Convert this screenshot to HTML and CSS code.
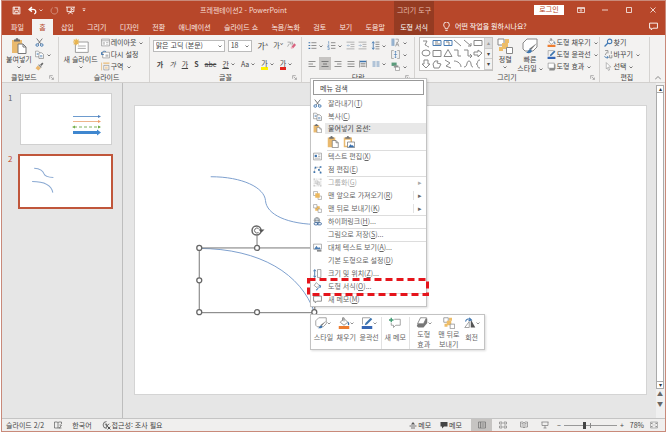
FILE: index.html
```html
<!DOCTYPE html>
<html lang="ko">
<head>
<meta charset="utf-8">
<title>프레젠테이션2 - PowerPoint</title>
<link rel="stylesheet" href="styles.css">
</head>
<body>
<svg class="sprite" aria-hidden="true">
  <symbol id="save" viewBox="0 0 16 16"><path d="M2 2h12v12H2zM4 2v5h8V2M5 14v-4h6v4" fill="none" stroke="currentColor" stroke-width="1.6"/></symbol>
  <symbol id="undo" viewBox="0 0 16 16"><path d="M7 2 2 6l5 4M2 6h7c6 0 6 7 2 8" fill="none" stroke="currentColor" stroke-width="2.4"/></symbol>
  <symbol id="redo" viewBox="0 0 16 16"><path d="M5 3a6 6 0 1 0 7 1M8 3h5v5" fill="none" stroke="currentColor" stroke-width="1.6"/></symbol>
  <symbol id="show" viewBox="0 0 16 16"><path d="M0 2h16M2 2v8h12V2M8 10v2M4 14l4-3 4 3M9 4v4l3-2z" fill="none" stroke="currentColor" stroke-width="1.5"/></symbol>
  <symbol id="chev" viewBox="0 0 8 8"><path d="m1 3 3 3 3-3" fill="none" stroke="currentColor" stroke-width="1.4"/></symbol>
  <symbol id="customize" viewBox="0 0 8 8"><path d="M1 1h6" stroke="currentColor"/><path d="M1 3.500h6L4 6.500z" fill="currentColor"/></symbol>
  <symbol id="display" viewBox="0 0 16 16"><path d="M1 3h14v10H1zM1 5h14M8 12V7M5.500 9.500 8 7l2.500 2.500" fill="none" stroke="currentColor" stroke-width="1.4"/></symbol>
  <symbol id="min" viewBox="0 0 16 16"><path d="M2 8h12" stroke="currentColor" stroke-width="1.5"/></symbol>
  <symbol id="max" viewBox="0 0 16 16"><path d="M3 3h10v10H3z" fill="none" stroke="currentColor" stroke-width="1.5"/></symbol>
  <symbol id="close" viewBox="0 0 16 16"><path d="m3 3 10 10M13 3 3 13" stroke="currentColor" stroke-width="1.5"/></symbol>
  <symbol id="bulb" viewBox="0 0 16 16"><path d="M6 12c0-3-3-3-3-7a5 5 0 0 1 10 0c0 4-3 4-3 7zM6 15h4" fill="none" stroke="currentColor" stroke-width="1.5"/></symbol>
  <symbol id="bubble" viewBox="0 0 16 16"><path d="M1 2h14v9H7l-3 3v-3H1z" fill="none" stroke="currentColor" stroke-width="1.6"/></symbol>
  <symbol id="paste" viewBox="0 0 16 16"><path d="M1 2h10v13H1z" fill="#e9b96e"/><path d="M3 3V1.500h1.500a1.500 1.500 0 0 1 3 0H9V3.500H3z" fill="#6f6f6f"/><path d="M7 6h5l3 3v6.500H7z" fill="#fff" stroke="#777"/><path d="M12 6v3h3" fill="none" stroke="#777"/></symbol>
  <symbol id="pastepic" viewBox="0 0 16 16"><path d="M1 2h11v13H1z" fill="#e9b96e"/><path d="M3 3V1.500h2a1.500 1.500 0 0 1 3 0h2v2H3z" fill="#777"/><path d="M3 5h7v8H3z" fill="#fff"/><path d="M6 8h9.500v7.500H6z" fill="#fff" stroke="#777"/><path d="m7 15 3-4 2 2 1-1 2 3z" fill="#376fae"/></symbol>
  <symbol id="cut" viewBox="0 0 16 16"><path d="m3 1 7.500 9.500M13 1 5.500 10.500" stroke="#666" stroke-width="1.500"/><circle cx="4" cy="12.500" r="2.300" fill="none" stroke="#3d74ae" stroke-width="1.600"/><circle cx="12" cy="12.500" r="2.300" fill="none" stroke="#3d74ae" stroke-width="1.600"/></symbol>
  <symbol id="copy" viewBox="0 0 16 16"><path d="M1 2h5l3 3v7H1z" fill="#fff" stroke="#777"/><path d="M7 5h5l3 3v7H7z" fill="#fff" stroke="#666"/><path d="M3 6h3M3 8h3M9 10h4M9 12h4" stroke="#3d74ae"/></symbol>
  <symbol id="brush" viewBox="0 0 16 16"><path d="m9 5 4-4 2 2-4 4z" fill="#666"/><path d="m7 4 5 5-1.500 1.500-5-5z" fill="#888"/><path d="m5 6 5 5-4 4-5-4z" fill="#eab56a"/></symbol>
  <symbol id="newslide" viewBox="0 0 20 18"><path d="M3 4h16v13H3z" fill="#fff" stroke="#888"/><path d="M6 9h10M6 12h10" stroke="#999"/><path d="M4 0v8M0 4h8M1 1l6 6M7 1 1 7" stroke="#e9b54f" stroke-width="1.500"/></symbol>
  <symbol id="layout" viewBox="0 0 16 16"><path d="M1 2h14v12H1zM1 5h14" fill="#fff" stroke="#777"/><path d="M3 7h4v5H3z" fill="#ccc"/><path d="M9 8h4M9 11h4" stroke="#999"/></symbol>
  <symbol id="reset" viewBox="0 0 16 16"><path d="M3 4h12v10H3z" fill="#fff" stroke="#777"/><path d="M8 8h5v4H8z" fill="#bbb"/><path d="M1 8c0-5 4-7 8-5M1 4v4h4" fill="none" stroke="#3d74ae" stroke-width="1.600"/></symbol>
  <symbol id="section" viewBox="0 0 16 16"><path d="M4 1h11v2H4z" fill="#eab56a"/><path d="M5 6h9v8H5z" fill="#fff" stroke="#777"/><path d="M1 1v14M7 9h5M7 11h5" stroke="#e0a24b"/></symbol>
  <symbol id="list" viewBox="0 0 16 16"><path d="M6 3h9M6 8h9M6 13h9" stroke="#777" stroke-width="1.400"/><path d="M1 2h3v2H1zM1 7h3v2H1zM1 12h3v2H1z" fill="#3d74ae"/></symbol>
  <symbol id="numbers" viewBox="0 0 16 16"><path d="M7 3h8M7 8h8M7 13h8" stroke="#777" stroke-width="1.400"/><path d="M2 1h1v4M1 7h3L1 10h3M1 12h3v3H1" stroke="#3d74ae" fill="none"/></symbol>
  <symbol id="outdent" viewBox="0 0 16 16"><path d="M1 2h14M8 6h7M8 10h7M1 14h14" stroke="#999" stroke-width="1.300"/><path d="M7 8H2m2-2L2 8l2 2" stroke="#8ba9c9" fill="none"/></symbol>
  <symbol id="indent" viewBox="0 0 16 16"><path d="M1 2h14M8 6h7M8 10h7M1 14h14" stroke="#999" stroke-width="1.300"/><path d="M1 8h5M4 6l2 2-2 2" stroke="#8ba9c9" fill="none"/></symbol>
  <symbol id="spacing" viewBox="0 0 16 16"><path d="M8 2h7M8 6h7M8 10h7M8 14h7" stroke="#777" stroke-width="1.400"/><path d="M4 2v12M2 4l2-3 2 3M2 12l2 3 2-3" stroke="#3d74ae" fill="none" stroke-width="1.500"/></symbol>
  <symbol id="left" viewBox="0 0 16 16"><path d="M1 3h14M1 8h9M1 13h14" stroke="#777" stroke-width="1.600"/></symbol>
  <symbol id="center" viewBox="0 0 16 16"><path d="M1 3h14M4 8h8M1 13h14" stroke="#666" stroke-width="1.600"/></symbol>
  <symbol id="right" viewBox="0 0 16 16"><path d="M1 3h14M6 8h9M1 13h14" stroke="#777" stroke-width="1.600"/></symbol>
  <symbol id="justify" viewBox="0 0 16 16"><path d="M1 3h14M1 8h14M1 13h14" stroke="#777" stroke-width="1.600"/></symbol>
  <symbol id="distribute" viewBox="0 0 16 16"><path d="M1 1v14M15 1v14M3 7h10M3 10h10M3 13h10" stroke="#777" stroke-width="1.300"/><path d="M2 3h12" stroke="#3d74ae" stroke-width="3"/></symbol>
  <symbol id="columns" viewBox="0 0 16 16"><path d="M1 4h6M1 8h6M1 12h6M9 4h6M9 8h6M9 12h6" stroke="#4b7db3" stroke-width="1.600"/></symbol>
  <symbol id="direction" viewBox="0 0 16 16"><path d="M2 1v13M5 1v13" stroke="#4b7db3" stroke-width="1.500"/><path d="M8 2h5v5M8 15l3-8 3 8M9 12h4" stroke="#777" fill="none"/></symbol>
  <symbol id="valign" viewBox="0 0 16 16"><path d="M5 1H1v14h4M11 1h4v14h-4" stroke="#777" fill="none"/><path d="M8 2v12M6 4l2-2 2 2M6 12l2 2 2-2M5 8h6" stroke="#3d74ae" fill="none"/></symbol>
  <symbol id="smartart" viewBox="0 0 16 16"><path d="M1 1h9v6H1z" fill="#5a9b7b"/><path d="M5 6h8v4H5z" fill="#999"/><path d="M8 9h7v6H8z" fill="#fff" stroke="#777"/></symbol>
  <symbol id="arrange" viewBox="0 0 16 16"><path d="M1 1h6v6H1z" fill="#fff" stroke="#888"/><path d="M5 5h6v6H5z" fill="#edbd68"/><path d="M8 1h4v4H8zM2 9h4v4H2z" fill="#edbd68"/><path d="M9.500 9.500h6v6h-6z" fill="#fff" stroke="#888"/></symbol>
  <symbol id="front" viewBox="0 0 16 16"><path d="M1 1h7v7H1zM9 9h6v6H9z" fill="#fff" stroke="#888"/><path d="M4 4h8v8H4z" fill="#edb95e"/></symbol>
  <symbol id="back" viewBox="0 0 16 16"><path d="M4 4h8v8H4z" fill="#edb95e"/><path d="M1 1h6v6H1zM9 9h6v6H9z" fill="#fff" stroke="#888"/></symbol>
  <symbol id="style" viewBox="0 0 16 16"><path d="M5 1h10v8l-4 4H3L1 11V5z" fill="#fff" stroke="#888"/><path d="m15 5-6 7-2-1z" fill="#777"/><path d="m8 11 2 2c-1 3-4 2-6 2 2-1 2-3 4-4z" fill="#3d74ae"/></symbol>
  <symbol id="fill" viewBox="0 0 16 16"><path d="m8 2 5 5-5 4-5-4zM6 5V1h2v5" fill="#fff" stroke="#777"/><path d="M13 6c3 2 2 5 1 5s-1-2-1-5z" fill="#3d74ae"/><path d="M1 12h14v4H1z" fill="#ed7d31"/></symbol>
  <symbol id="outline" viewBox="0 0 16 16"><path d="M12 1H2v9" fill="none" stroke="#888"/><path d="m13 1 2 2-7 7-3 1 1-3z" fill="#3d74ae"/><path d="M1 12h14v4H1z" fill="#3566b4"/></symbol>
  <symbol id="effect" viewBox="0 0 16 16"><path d="m6 1 9 1v6l-5 6H3l-2-2z" fill="#777"/><path d="M6 1h8l-4 8H2z" fill="#fff" stroke="#777"/></symbol>
  <symbol id="effect2" viewBox="0 0 16 16"><path d="M5 4h10v8l-2 3H4z" fill="#8a8a8a"/><path d="M2 2h11v9H2z" fill="#fff" stroke="#777"/></symbol>
  <symbol id="search" viewBox="0 0 16 16"><circle cx="10" cy="6" r="4" fill="none" stroke="#4279b4" stroke-width="1.800"/><path d="m7 9-6 6" stroke="#4279b4" stroke-width="2.200"/></symbol>
  <symbol id="replace" viewBox="0 0 16 16"><path d="M2 1h5v5M2 9l3-5M10 9v5h4V9M13 2v5" fill="none" stroke="#777" stroke-width="1.300"/><path d="M1 11c1 3 4 3 6 2M5 11l3 2-3 2" fill="none" stroke="#3d74ae" stroke-width="1.400"/></symbol>
  <symbol id="select" viewBox="0 0 16 16"><path d="m4 1 8 8H8l2 5-2 1-2-5-2 2z" fill="#fff" stroke="#888"/></symbol>
  <symbol id="launch" viewBox="0 0 8 8"><path d="M1 6V1h5M3 3l4 4M7 4v3H4" fill="none" stroke="#888"/></symbol>
  <symbol id="collapse" viewBox="0 0 8 8"><path d="m0 6 4-4 4 4" fill="none" stroke="#666"/></symbol>
  <symbol id="eraser" viewBox="0 0 16 16"><path d="M1 2h5v4M1 10l3-5M9 1v7M9 4h2" fill="none" stroke="#777"/><path d="m8 10 5-6 3 3-5 6z" fill="#d9627e"/><path d="m8 10 3 3-3 1-2-2z" fill="#efb3c0"/></symbol>
  <symbol id="textedit" viewBox="0 0 16 16"><path d="M1 2h14v12H1z" fill="#fff" stroke="#777"/><path d="M3 5h4v4H3z" fill="#3d74ae"/><path d="M9 5h4M9 8h4M3 11h10" stroke="#888"/></symbol>
  <symbol id="points" viewBox="0 0 16 16"><path d="M2 13 4 4h9l-3 4 4 5" fill="none" stroke="#777" stroke-dasharray="2 1"/><path d="M1 11h3v3H1zM3 3h3v3H3zM12 2h3v3h-3zM9 7h3v3H9zM12 12h3v3h-3z" fill="#3d74ae"/></symbol>
  <symbol id="group" viewBox="0 0 16 16"><path d="M2 2h12v12H2z" fill="none" stroke="#bbb" stroke-dasharray="2 1"/><path d="M4 5h5v5H4zM7 7h5v5H7z" fill="#eee" stroke="#bbb"/><path d="M1 1h2v2H1zM13 1h2v2h-2zM1 13h2v2H1zM13 13h2v2h-2z" fill="#bbb"/></symbol>
  <symbol id="link" viewBox="0 0 16 16"><circle cx="7" cy="6" r="5" fill="#d8e5ef" stroke="#777"/><path d="M2 6h10M7 1c-4 4-3 7 0 10M7 1c4 4 3 7 0 10" fill="none" stroke="#777"/><rect x="2" y="10" width="7" height="4" rx="2" fill="#fff" stroke="#315f98" stroke-width="1.500"/><rect x="8" y="10" width="7" height="4" rx="2" fill="none" stroke="#315f98" stroke-width="1.500"/></symbol>
  <symbol id="alt" viewBox="0 0 16 16"><path d="M1 2h14v9H1z" fill="#fff" stroke="#777"/><path d="m2 11 4-6 3 4 2-2 3 4z" fill="#4b7db3"/><path d="M7 14h8" stroke="#555" stroke-width="2"/></symbol>
  <symbol id="size" viewBox="0 0 16 16"><path d="M3 2v12M1 4l2-3 2 3M1 12l2 3 2-3" fill="none" stroke="#3d74ae" stroke-width="1.600"/><path d="M8 1h6v14H8z" fill="#fff" stroke="#666"/></symbol>
  <symbol id="format" viewBox="0 0 16 16"><path d="m6 1 5 5-4 4-5-4z" fill="#fff" stroke="#666"/><path d="M11 6c3 0 2 3 1 4" fill="none" stroke="#3d74ae" stroke-width="2"/><path d="m15 6-6 6-2 3-2-1 3-3z" fill="#3d74ae"/></symbol>
  <symbol id="newmemo" viewBox="0 0 16 16"><path d="M7 3h8v8H9l-3 3v-3H3V8" fill="#fff" stroke="#888"/><path d="M3 1v6M0 4h6" stroke="#409b72" stroke-width="1.800"/></symbol>
  <symbol id="rotate" viewBox="0 0 16 16"><path d="M9 3v11h6z" fill="#555"/><path d="M7 6v8H1z" fill="#fff" stroke="#888"/><path d="M2 6c1-4 5-4 7-2M7 1l3 3-4 1" fill="none" stroke="#3d74ae" stroke-width="1.400"/></symbol>
  <symbol id="book" viewBox="0 0 16 16"><path d="M8 3v11H1V2h5zM8 3l2-1h5v4M8 14h4M11 8h4l-4 6h4" fill="none" stroke="currentColor" stroke-width="1.200"/></symbol>
  <symbol id="access" viewBox="0 0 16 16"><path d="M8 1a6 6 0 1 0 0 12M7 4l2 4 4 6M5 6l4 2 4-3M7 13l2-5" fill="none" stroke="currentColor" stroke-width="1.300"/><path d="m10 10 5 5m0-5-5 5" stroke="currentColor" stroke-width="1.600"/></symbol>
  <symbol id="notes" viewBox="0 0 16 16"><path d="M1 10h14M4 14h8" stroke="#555" stroke-width="1.600"/><path d="m4 7 4-5 4 5z" fill="#555"/></symbol>
  <symbol id="comment" viewBox="0 0 16 16"><path d="M1 2h14v9H8l-4 4v-4H1z" fill="#444"/></symbol>
  <symbol id="normal" viewBox="0 0 16 16"><path d="M1 2h14v12H1zM5 2v12M7 6h6M7 10h6" fill="none" stroke="#666" stroke-width="1.300"/></symbol>
  <symbol id="sorter" viewBox="0 0 16 16"><path d="M1 2h5v4H1zM10 2h5v4h-5zM1 10h5v4H1zM10 10h5v4h-5z" fill="none" stroke="#777" stroke-width="1.300"/></symbol>
  <symbol id="reading" viewBox="0 0 16 16"><path d="M8 4v10M1 2h5l2 2 2-2h5v10h-5l-2 2-2-2H1zM3 5h3M3 8h3M10 5h3M10 8h3" fill="none" stroke="#777" stroke-width="1.300"/></symbol>
  <symbol id="screen" viewBox="0 0 16 16"><path d="M1 2h14M2 2v7h12V2M8 9v5M5 14h6" fill="none" stroke="#777" stroke-width="1.400"/></symbol>
  <symbol id="fit" viewBox="0 0 16 16"><path d="M1 2h14v12H1z" fill="none" stroke="#777"/><path d="M6 7 3 4m0 2V4h2M10 7l3-3m-2 0h2v2M6 9l-3 3m0-2v2h2M10 9l3 3m-2 0h2v-2" fill="none" stroke="#666"/></symbol>
</svg>

<div class="app">
<header class="top">
  <div class="top-left">
    <div class="titlebar">
      <div class="quick">
        <button aria-label="저장"><svg class="i9"><use href="#save"/></svg></button>
        <button aria-label="실행 취소"><svg class="i9"><use href="#undo"/></svg><svg class="i4"><use href="#chev"/></svg></button>
        <button class="dim" aria-label="다시 실행"><svg class="i9"><use href="#redo"/></svg></button>
        <button aria-label="처음부터"><svg class="i9"><use href="#show"/></svg></button>
        <button aria-label="사용자 지정"><svg class="i4"><use href="#customize"/></svg></button>
      </div>
      <h1>프레젠테이션2 - PowerPoint</h1>
    </div>
    <nav class="tabs">
      <a href="#file">파일</a><a class="active" href="#home">홈</a><a href="#insert">삽입</a><a href="#draw">그리기</a><a href="#design">디자인</a><a href="#transition">전환</a><a href="#animation">애니메이션</a><a href="#slideshow">슬라이드 쇼</a><a href="#record">녹음/녹화</a><a href="#review">검토</a><a href="#view">보기</a><a href="#help">도움말</a>
    </nav>
  </div>
  <div class="context"><span>그리기 도구</span><a href="#format">도형 서식</a></div>
  <div class="top-right">
    <div class="winbar">
      <button class="login">로그인</button>
      <button aria-label="리본 표시"><svg class="i8"><use href="#display"/></svg></button>
      <button aria-label="최소화"><svg class="i8"><use href="#min"/></svg></button>
      <button aria-label="최대화"><svg class="i8"><use href="#max"/></svg></button>
      <button aria-label="닫기"><svg class="i8"><use href="#close"/></svg></button>
    </div>
    <div class="tell">
      <svg class="i9"><use href="#bulb"/></svg>
      <input type="text" aria-label="작업 검색" placeholder="어떤 작업을 원하시나요?">
      <button aria-label="메모"><svg class="i9"><use href="#bubble"/></svg></button>
    </div>
  </div>
</header>

<section class="ribbon">
  <div class="group g-clip">
    <div class="body">
      <button class="big"><svg class="i16"><use href="#paste"/></svg><span>붙여넣기</span><svg class="i4"><use href="#chev"/></svg></button>
      <div class="stack">
        <button aria-label="잘라내기"><svg class="i9"><use href="#cut"/></svg></button>
        <button aria-label="복사"><svg class="i9"><use href="#copy"/></svg><svg class="i4"><use href="#chev"/></svg></button>
        <button aria-label="서식 복사"><svg class="i9"><use href="#brush"/></svg></button>
      </div>
    </div>
    <footer><span>클립보드</span><svg class="i5"><use href="#launch"/></svg></footer>
  </div>
  <div class="group g-slides">
    <div class="body">
      <button class="big"><svg class="i16"><use href="#newslide"/></svg><span>새 슬라이드</span><svg class="i4"><use href="#chev"/></svg></button>
      <div class="stack">
        <button><svg class="i9"><use href="#layout"/></svg>레이아웃<svg class="i4"><use href="#chev"/></svg></button>
        <button><svg class="i9"><use href="#reset"/></svg>다시 설정</button>
        <button><svg class="i9"><use href="#section"/></svg>구역<svg class="i4"><use href="#chev"/></svg></button>
      </div>
    </div>
    <footer><span>슬라이드</span></footer>
  </div>
  <div class="group g-font">
    <div class="body rows">
      <div class="row">
        <span class="combo family"><select aria-label="글꼴"><option>맑은 고딕 (본문)</option></select><svg class="i4"><use href="#chev"/></svg></span>
        <span class="combo points"><select aria-label="글꼴 크기"><option>18</option></select><svg class="i4"><use href="#chev"/></svg></span>
        <button class="ga">가<sup>^</sup></button><button class="ga small">가<sup>ˇ</sup></button>
        <button aria-label="서식 지우기"><svg class="i9"><use href="#eraser"/></svg></button>
      </div>
      <div class="row spread">
        <button><b>가</b></button><button><i>가</i></button><button><u>가</u></button><button><b>S</b></button><button><s>abc</s></button>
        <button><u>간</u><svg class="i4"><use href="#chev"/></svg></button><button>Aa <svg class="i4"><use href="#chev"/></svg></button>
        <button><span class="mark yellow">가</span><svg class="i4"><use href="#chev"/></svg></button><button><span class="mark red">가</span><svg class="i4"><use href="#chev"/></svg></button>
      </div>
    </div>
    <footer><span>글꼴</span><svg class="i5"><use href="#launch"/></svg></footer>
  </div>
  <div class="group g-para">
    <div class="body">
      <div class="rows grow">
        <div class="row spread">
          <button aria-label="글머리 기호"><svg class="i9"><use href="#list"/></svg><svg class="i4"><use href="#chev"/></svg></button>
          <button aria-label="번호 매기기"><svg class="i9"><use href="#numbers"/></svg><svg class="i4"><use href="#chev"/></svg></button>
          <button aria-label="내어쓰기"><svg class="i9"><use href="#outdent"/></svg></button>
          <button aria-label="들여쓰기"><svg class="i9"><use href="#indent"/></svg></button>
          <button aria-label="줄 간격"><svg class="i9"><use href="#spacing"/></svg><svg class="i4"><use href="#chev"/></svg></button>
        </div>
        <div class="row spread">
          <button aria-label="왼쪽"><svg class="i8"><use href="#left"/></svg></button>
          <button class="on" aria-label="가운데"><svg class="i8"><use href="#center"/></svg></button>
          <button aria-label="오른쪽"><svg class="i8"><use href="#right"/></svg></button>
          <button aria-label="양쪽"><svg class="i8"><use href="#justify"/></svg></button>
          <button aria-label="균등"><svg class="i8"><use href="#distribute"/></svg></button>
          <button aria-label="단"><svg class="i8"><use href="#columns"/></svg><svg class="i4"><use href="#chev"/></svg></button>
        </div>
      </div>
      <div class="stack">
        <button aria-label="텍스트 방향"><svg class="i9"><use href="#direction"/></svg><svg class="i4"><use href="#chev"/></svg></button>
        <button aria-label="텍스트 맞춤"><svg class="i9"><use href="#valign"/></svg><svg class="i4"><use href="#chev"/></svg></button>
        <button aria-label="스마트아트"><svg class="i9"><use href="#smartart"/></svg><svg class="i4"><use href="#chev"/></svg></button>
      </div>
    </div>
    <footer><span>단락</span><svg class="i5"><use href="#launch"/></svg></footer>
  </div>
  <div class="group g-draw">
    <div class="body">
      <div class="gallery">
        <svg viewBox="0 0 64 32" class="shapes" role="img" aria-label="도형">
          <g fill="none" stroke="#888">
            <path d="M3 3h4L5 7c4 1 0 1 4 2M34 2l7 6M44 2l7 6M51 5v3h-3M54 2.500h8v5h-8z"/>
            <path d="M13 2.500h8v5h-8zM24 2.500h8v5h-8z" stroke="#4b7db3"/><path d="M15 4h3M15 6h5M26 4h3v3"/>
            <ellipse cx="6" cy="15" rx="4" ry="3"/><path d="M13 12.500h8v6h-8zM24 18.500l4-7 4 7zM34 12h4v6h3M44 12h4v6h4M50 16l2 2-2 2M54 14h4v-2l4 3-4 4v-2h-4z"/>
            <path d="M4 22h4v4h2l-4 4-4-4h2zM15 23h3l-1 2 4 1-2 4h-5l-1-4zM25 22l5 3-4 3 5 2M34 23c4 0 7 3 7 6M44 29c4 0 2-6 5-6s1 6 4 6M60 22c-4 0-1 4-4 4 3 0 0 4 4 4"/>
          </g>
        </svg>
        <div class="gscroll"><button aria-label="위">▴</button><button aria-label="아래">▾</button><button aria-label="자세히">▾</button></div>
      </div>
      <button class="big"><svg class="i16"><use href="#arrange"/></svg><span>정렬</span><svg class="i4"><use href="#chev"/></svg></button>
      <button class="big"><svg class="i16"><use href="#style"/></svg><span>빠른</span><span>스타일 <svg class="i4"><use href="#chev"/></svg></span></button>
      <div class="stack">
        <button><svg class="i9"><use href="#fill"/></svg>도형 채우기<svg class="i4"><use href="#chev"/></svg></button>
        <button><svg class="i9"><use href="#outline"/></svg>도형 윤곽선<svg class="i4"><use href="#chev"/></svg></button>
        <button><svg class="i9"><use href="#effect2"/></svg>도형 효과<svg class="i4"><use href="#chev"/></svg></button>
      </div>
    </div>
    <footer><span>그리기</span><svg class="i5"><use href="#launch"/></svg></footer>
  </div>
  <div class="group g-edit">
    <div class="body">
      <div class="stack">
        <button><svg class="i9"><use href="#search"/></svg>찾기</button>
        <button><svg class="i9"><use href="#replace"/></svg>바꾸기<svg class="i4"><use href="#chev"/></svg></button>
        <button><svg class="i9"><use href="#select"/></svg>선택<svg class="i4"><use href="#chev"/></svg></button>
      </div>
    </div>
    <footer><span>편집</span></footer>
  </div>
  <button class="collapse" aria-label="리본 축소"><svg class="i6"><use href="#collapse"/></svg></button>
</section>

<main class="work">
  <aside class="thumbs">
    <div class="thumb"><span>1</span>
      <svg viewBox="0 0 90 50">
        <path d="M52 22.500h26" stroke="#6d9bce"/><path d="m77 21 3 1.500-3 1.500z" fill="#4f81bd"/>
        <path d="M52 27.500h26" stroke="#edb48b"/><path d="m77 26 3 1.500-3 1.500z" fill="#ed9b62"/>
        <path d="M53 33h26" stroke="#7fb35f" stroke-dasharray="3 2"/><path d="m54 31.500-3 1.500 3 1.500zM77 31.500l3 1.500-3 1.500z" fill="#70ad47"/>
        <path d="M52 38.500h26" stroke="#3f87cf" stroke-width="3"/><path d="m76 35.500 4 3-4 3z" fill="#3f87cf"/>
      </svg>
    </div>
    <div class="thumb current"><span>2</span>
      <svg viewBox="0 0 90 50"><path d="M14 12c6 0 9 3 9.500 5 1 3 5 4 9.500 4M12 25c10 0 19 3 20.500 11" fill="none" stroke="#8aa9d2"/></svg>
    </div>
  </aside>
  <section class="stage">
    <div class="slide">
      <svg viewBox="134 106 513 289" role="img" aria-label="슬라이드 곡선">
        <g fill="none">
          <path d="M210 177c32 0 54 11 55 24 1 14 22 24 55 24M198 249c62 0 103 26 116 64" stroke="#7d9fce"/>
          <path d="M198.500 248.500h116v65h-116zM256.500 236v12" stroke="#777"/>
          <circle cx="256" cy="231" r="4.500" stroke="#666" stroke-width="1.500"/>
          <path d="M258 229a2.500 2.500 0 1 0 0 4" stroke="#666"/>
        </g>
        <path d="M258 230h6l-3 3z" fill="#555"/>
        <g fill="#fff" stroke="#666" stroke-width="1.300">
          <circle cx="198.500" cy="248.500" r="2.500"/><circle cx="256.500" cy="248.500" r="2.500"/><circle cx="198.500" cy="281" r="2.500"/><circle cx="198.500" cy="313" r="2.500"/><circle cx="256.500" cy="313" r="2.500"/><circle cx="314" cy="313" r="2.500"/>
        </g>
      </svg>
    </div>
  </section>
  <div class="scroll">
    <button aria-label="위로">▴</button><div class="track"></div><button aria-label="아래로">▾</button>
    <button class="page" aria-label="이전 슬라이드">▲</button><button class="page" aria-label="다음 슬라이드">▼</button>
  </div>
</main>

<footer class="status">
  <span>슬라이드 2/2</span><svg class="i8"><use href="#book"/></svg><span>한국어</span>
  <span class="pair"><svg class="i9"><use href="#access"/></svg>접근성: 조사 필요</span>
  <div class="status-right">
    <button class="pair"><svg class="i8"><use href="#notes"/></svg>메모</button>
    <button class="pair"><svg class="i8"><use href="#comment"/></svg>메모</button>
    <div class="views">
      <button class="on" aria-label="기본"><svg class="i8"><use href="#normal"/></svg></button><button aria-label="여러 슬라이드"><svg class="i8"><use href="#sorter"/></svg></button><button aria-label="읽기용 보기"><svg class="i8"><use href="#reading"/></svg></button><button aria-label="슬라이드 쇼"><svg class="i8"><use href="#screen"/></svg></button>
    </div>
    <div class="zoom"><button>−</button><input type="range" min="0" max="100" value="38" aria-label="확대/축소"><button>+</button></div>
    <span>78%</span>
    <button aria-label="창에 맞춤"><svg class="i8"><use href="#fit"/></svg></button>
  </div>
</footer>

<div class="menu">
  <input type="text" aria-label="메뉴 검색" placeholder="메뉴 검색">
  <button><svg class="i9"><use href="#cut"/></svg>잘라내기(<u>T</u>)</button>
  <button><svg class="i9"><use href="#copy"/></svg>복사(<u>C</u>)</button>
  <div class="head"><svg class="i9"><use href="#paste"/></svg>붙여넣기 옵션:</div>
  <div class="opts"><button aria-label="대상 테마 사용"><svg class="i12"><use href="#paste"/></svg></button><button aria-label="그림"><svg class="i12"><use href="#pastepic"/></svg></button></div>
  <button class="sep"><svg class="i9"><use href="#textedit"/></svg>텍스트 편집(<u>X</u>)</button>
  <button><svg class="i9"><use href="#points"/></svg>점 편집(<u>E</u>)</button>
  <button class="sep off sub"><svg class="i9"><use href="#group"/></svg>그룹화(<u>G</u>)</button>
  <button class="sub split"><svg class="i9"><use href="#front"/></svg>맨 앞으로 가져오기(<u>R</u>)</button>
  <button class="sub split"><svg class="i9"><use href="#back"/></svg>맨 뒤로 보내기(<u>K</u>)</button>
  <button class="sep"><svg class="i9"><use href="#link"/></svg>하이퍼링크(<u>H</u>)...</button>
  <button class="sep"><svg class="i9"></svg>그림으로 저장(<u>S</u>)...</button>
  <button class="sep"><svg class="i9"><use href="#alt"/></svg>대체 텍스트 보기(<u>A</u>)...</button>
  <button><svg class="i9"></svg>기본 도형으로 설정(<u>D</u>)</button>
  <button><svg class="i9"><use href="#size"/></svg>크기 및 위치(<u>Z</u>)...</button>
  <button><svg class="i9"><use href="#format"/></svg>도형 서식(<u>O</u>)...</button>
  <button class="sep"><svg class="i9 grey"><use href="#bubble"/></svg>새 메모(<u>M</u>)</button>
</div>

<div class="mini">
  <button><span class="ic"><svg class="i12"><use href="#style"/></svg><svg class="i4"><use href="#chev"/></svg></span>스타일</button>
  <button><span class="ic"><svg class="i12"><use href="#fill"/></svg><svg class="i4"><use href="#chev"/></svg></span>채우기</button>
  <button><span class="ic"><svg class="i12"><use href="#outline"/></svg><svg class="i4"><use href="#chev"/></svg></span>윤곽선</button>
  <button class="line"><span class="ic"><svg class="i12"><use href="#newmemo"/></svg></span>새 메모</button>
  <button class="line two"><span class="ic"><svg class="i12"><use href="#effect"/></svg><svg class="i4"><use href="#chev"/></svg></span><span>도형</span><span>효과</span></button>
  <button class="two"><span class="ic"><svg class="i12"><use href="#arrange"/></svg></span><span>맨 뒤로</span><span>보내기</span></button>
  <button><span class="ic"><svg class="i12"><use href="#rotate"/></svg><svg class="i4"><use href="#chev"/></svg></span>회전</button>
</div>
<svg class="callout" viewBox="0 0 122 18" aria-hidden="true"><rect x="1.500" y="1.500" width="119" height="15" fill="none" stroke="#e5141b" stroke-width="3" stroke-dasharray="7 4"/></svg>
</div>
</body>
</html>
```
FILE: styles.css
```css
* { box-sizing: border-box; }

body {
  margin: 0;
  background: #fff;
  color: #444;
  font: 7px/9px "Noto Sans CJK KR", "Liberation Sans", sans-serif;
}

button, input, select {
  margin: 0;
  padding: 0;
  border: 0;
  background: none;
  color: inherit;
  font: inherit;
  white-space: nowrap;
}

button { display: flex; align-items: center; justify-content: center; }
a { color: inherit; text-decoration: none; white-space: nowrap; }
svg { flex: none; }
.sprite { display: none; }
.i4 { width: 4px; height: 4px; }
.i5 { width: 5px; height: 5px; }
.i6 { width: 6px; height: 6px; }
.i8 { width: 8px; height: 8px; }
.i9 { width: 9px; height: 9px; }
.i12 { width: 12px; height: 12px; }
.i16 { width: 16px; height: 16px; }
.grey { color: #888; }

.app {
  position: relative;
  display: flex;
  flex-direction: column;
  min-height: 100vh;
  padding: 1px 1px 1px 2px;
  background: linear-gradient(#c98a7a, #c98a7a) 1px 0 / 100% 100% no-repeat #fff;
}

/* Title bar and tabs */
.top {
  display: grid;
  grid-template-columns: minmax(0, 392fr) minmax(0, 40fr) minmax(0, 231fr);
  height: 34px;
  background: #b7472a;
  color: #fff;
}
.titlebar { display: flex; height: 18px; align-items: center; justify-content: space-between; padding: 0 104px 0 10px; }
.quick { display: flex; gap: 7px; }
.quick button { gap: 2px; }
.titlebar h1 { width: 90px; margin: 0; font: inherit; white-space: nowrap; color: #f6ddd5; }
.dim { opacity: .4; }
.tabs { display: flex; justify-content: space-between; height: 16px; line-height: 16px; padding: 0 9px; color: #fbe9e3; }
.tabs .active { margin: 0 -5px; padding: 0 7px; background: #f3f2f1; color: #b7472a; }
.context { display: flex; flex-direction: column; align-items: center; background: #953b22; }
.context span { line-height: 18px; color: #e8bcae; white-space: nowrap; }
.context a { line-height: 16px; }
.winbar { display: flex; height: 17px; align-items: center; justify-content: flex-end; gap: 16px; padding-right: 8px; }
.winbar .login { width: 30px; height: 10px; background: #fff; color: #b7472a; margin-right: -3px; }
.tell { display: flex; align-items: center; gap: 4px; height: 17px; padding: 0 7px 0 8px; }
.tell input { flex: 1; min-width: 0; }
::placeholder { color: inherit; opacity: 1; }

/* Ribbon */
.ribbon { display: flex; height: 48px; background: #f3f2f1; border-bottom: 1px solid #d2d0ce; }
.group { display: flex; flex-direction: column; min-width: 0; border-right: 1px solid #d5d3d1; margin: 2px 0 0; }
.g-clip { flex: 57 1 0; }
.g-slides { flex: 90 1 0; }
.g-font { flex: 153 1 0; }
.g-para { flex: 113 1 0; }
.g-draw { flex: 185 1 0; }
.g-edit { flex: 50 1 0; }
.body { display: flex; flex: 1; padding: 0 4px 1px; gap: 3px; }
.group footer { display: flex; align-items: center; height: 9px; padding: 0 4px 0 9px; }
.group footer span { flex: 1; text-align: center; }
.g-clip footer span { text-align: left; }
.big { flex-direction: column; justify-content: flex-start; padding-top: 1px; line-height: 8px; }
.big span { padding-top: 1px; }
.big > .i4 { margin-top: 2px; }
.stack { display: flex; flex-direction: column; justify-content: space-between; align-items: flex-start; }
.stack button { height: 11px; gap: 1px; }
.stack .i4 { margin-left: 2px; }
.rows { display: flex; flex-direction: column; justify-content: space-around; gap: 1px; }
.grow { flex: 1; }
.row { display: flex; align-items: center; gap: 3px; height: 14px; }
.spread { justify-content: space-between; }
.spread button { gap: 2px; }
.g-font .body { padding: 0 5px 0 3px; }
.combo { display: flex; align-items: center; height: 12px; border: 1px solid #bbb; background: #fff; padding-right: 2px; }
.combo select { flex: 1; min-width: 0; height: 10px; padding-left: 2px; appearance: none; }
.family { width: 76px; }
.points { width: 25px; }
.g-font .row > button sup { font-size: 6px; line-height: 6px; }
.ga { font-size: 8px; padding: 0 1px; }
.ga.small { font-size: 7px; }
.row .ga:first-of-type { margin-left: 2px; }
.g-font .spread { padding: 0 4px; }
.mark { display: block; height: 11px; line-height: 9px; border-bottom: 3px solid; }
.yellow { border-color: #fff200; }
.red { border-color: #e3241c; }
.on { background: #c6c4c2; }
.g-para .body { padding: 0 7px 1px 6px; gap: 5px; }
.g-para .on { width: 12px; height: 13px; margin: 0 -2px; }
.g-draw .body { padding: 0 6px 1px 4px; gap: 4px; justify-content: space-between; }
.gallery { display: flex; flex: 1; height: 34px; border: 1px solid #c3c1bf; background: #fff; }
.shapes { flex: 1; min-width: 0; height: 32px; }
.gscroll { display: flex; flex-direction: column; width: 8px; background: #f3f2f1; }
.gscroll button { flex: 1; border-left: 1px solid #ccc; border-bottom: 1px solid #ccc; line-height: 6px; font-size: 6px; }
.gscroll button:first-child { background: #ddd; color: #999; }
.collapse { flex: 15 1 0; align-items: flex-end; padding-bottom: 1px; }

/* Workspace */
.work { display: grid; grid-template-columns: minmax(0, 121fr) minmax(0, 533fr) 9px; flex: 1; background: #e6e6e6; border-bottom: 1px solid #c4c4c4; }
.thumbs { padding-top: 10px; border-right: 1px solid #bdbdbd; }
.thumb { display: flex; align-items: flex-start; gap: 7px; padding-left: 6px; margin-bottom: 10px; font-size: 8px; }
.thumb span { width: 5px; color: #666; }
.thumb svg { width: 92px; height: 52px; border: 1px solid #d0d0d0; background: #fff; }
.thumb.current { gap: 5px; margin-top: -1px; }
.thumb.current span { color: #c2492b; }
.thumb.current svg { width: 95px; height: 55px; border: 2px solid #c0563b; }
.stage { padding: 22px 9px 22px 11px; }
.slide { background: #fff; border: 1px solid #d4d4d4; }
.slide svg { display: block; width: 100%; }
.scroll { display: flex; flex-direction: column; padding: 2px 1px 9px 0; background: #f0f0f0; }
.scroll button { height: 8px; border: 1px solid #aaa; background: #fff; color: #333; line-height: 6px; font-size: 6px; }
.track { flex: 1; background: #fff; border: 1px solid #aaa; border-width: 0 1px; }
.scroll .page { height: 10px; border: 0; background: none; color: #666; }

/* Status bar */
.status { display: flex; align-items: center; gap: 10px; height: 12px; padding: 0 7px 0 4px; background: #f0efee; white-space: nowrap; }
.pair { display: flex; align-items: center; gap: 1px; }
.status-right { display: flex; align-items: center; gap: 6px; height: 100%; margin-left: auto; }
.status-right .pair { margin-right: 3px; }
.views { display: flex; height: 100%; }
.views button { width: 21px; }
.zoom { display: flex; align-items: center; gap: 3px; margin-left: -4px; }
.zoom input { width: 53px; height: 9px; appearance: none; background: linear-gradient(#888, #888) center / 1px 5px no-repeat, linear-gradient(#999, #999) center / 100% 1px no-repeat; }
.zoom input::-webkit-slider-thumb { appearance: none; width: 3px; height: 7px; background: #444; }

/* Context menu */
.menu {
  position: absolute;
  left: 310px;
  top: 78px;
  display: flex;
  flex-direction: column;
  width: 117px;
  border: 1px solid #c3c3c3;
  background: #fff;
  box-shadow: 1px 1px 2px #0002;
  color: #666;
}
.menu input { height: 15px; margin: 1px 2px 2px; padding-left: 6px; border: 1px solid #999; color: #444; }
.menu > button, .head { display: flex; align-items: center; justify-content: flex-start; gap: 6px; height: 13px; padding-left: 2px; }
.menu > button { gap: 0; }
.menu > button svg { margin-right: 6px; }
.menu .head { height: 11px; background: linear-gradient(#e8e8e8, #e8e8e8) 14px 0 no-repeat; font-weight: 500; }
.opts { display: flex; gap: 4px; height: 16px; padding-left: 16px; align-items: center; }
.menu .sep { background: linear-gradient(#ddd, #ddd) 16px 0 / 100% 1px no-repeat; }
.menu .off { color: #aaa; }
.sub::after { content: "▸"; margin-left: auto; padding: 0 4px; }
.split::after { border-left: 1px solid #e2e2e2; }

/* Floating toolbar */
.mini {
  position: absolute;
  left: 310px;
  top: 314px;
  display: flex;
  width: 175px;
  height: 36px;
  padding: 2px 1px 0;
  border: 1px solid #c3c3c3;
  background: #fff;
  box-shadow: 1px 1px 2px #0002;
}
.mini button { flex: 1 1 0; flex-direction: column; justify-content: flex-start; line-height: 10px; color: #666; }
.mini .ic { display: flex; align-items: center; height: 12px; margin-bottom: 3px; }
.mini .two .ic { margin-bottom: 0; }
.mini .two span + span { height: 10px; }
.mini .line { flex-grow: 1.2; border-left: 1px solid #e2e2e2; }

.callout { position: absolute; left: 307px; top: 278px; width: 122px; height: 18px; }
```
